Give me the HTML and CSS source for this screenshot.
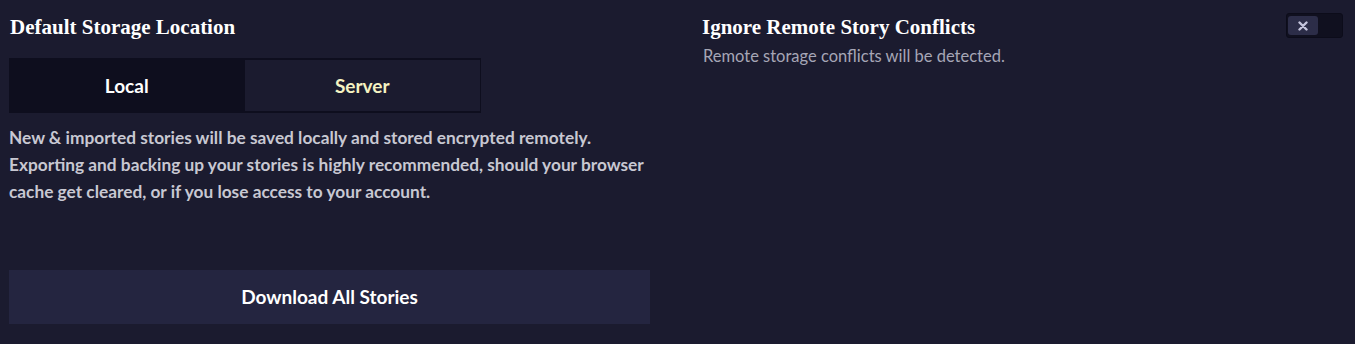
FILE: index.html
```html
<!DOCTYPE html>
<html>
<head>
<meta charset="utf-8">
<link rel="stylesheet" href="styles.css">
</head>
<body>
<div class="page">
  <section class="col">
    <h2 class="title">Default Storage Location</h2>
    <div class="seg">
      <button class="seg-btn active">Local</button>
      <button class="seg-btn">Server</button>
    </div>
    <p class="desc">New &amp; imported stories will be saved locally and stored encrypted remotely. Exporting and backing up your stories is highly recommended, should your browser cache get cleared, or if you lose access to your account.</p>
    <button class="wide-btn">Download All Stories</button>
  </section>
  <section class="col">
    <div class="setting">
      <div class="setting-text">
        <h2 class="title title-right">Ignore Remote Story Conflicts</h2>
        <p class="sub">Remote storage conflicts will be detected.</p>
      </div>
      <div class="switch">
        <span class="knob">
          <svg width="10" height="10" viewBox="0 0 10 10"><path d="M1.5 1.5 L8.5 8.5 M8.5 1.5 L1.5 8.5" stroke="#c4c4dc" stroke-width="2.4" stroke-linecap="round"/></svg>
        </span>
      </div>
    </div>
  </section>
</div>
</body>
</html>
```
FILE: styles.css
```css
html, body {
  margin: 0;
  padding: 0;
  background: #1b1b2f;
  width: 1355px;
  height: 344px;
  overflow: hidden;
}
.page {
  display: grid;
  grid-template-columns: 641px 641px;
  column-gap: 53px;
  padding: 0 9px;
  font-family: "Source Sans Pro", Lato, "Liberation Sans", sans-serif;
}
.col {
  display: flex;
  flex-direction: column;
}
.title {
  margin: 15px 0 0 1px;
  font-family: "Liberation Serif", serif;
  font-weight: 700;
  font-size: 21px;
  line-height: 24px;
  color: #ffffff;
}
.title-right {
  margin-left: -1px;
}
.seg {
  display: flex;
  margin-top: 19px;
  width: 472px;
  height: 55px;
  background: #0e0e1e;
  padding: 2px 1px 2px 0;
  box-sizing: border-box;
}
.seg-btn {
  flex: 1;
  border: 0;
  background: #1b1b2f;
  color: #f5f3c2;
  font-family: inherit;
  font-weight: 700;
  font-size: 19px;
}
.seg-btn.active {
  background: #0e0e1e;
  color: #ffffff;
}
.desc {
  margin: 11px 0 0 0;
  font-size: 17.3px;
  line-height: 27px;
  font-weight: 700;
  color: #c8c8d2;
}
.wide-btn {
  margin-top: 65px;
  height: 54px;
  border: 0;
  background: #242540;
  color: #ffffff;
  font-family: inherit;
  font-weight: 700;
  font-size: 19px;
  padding-bottom: 2px;
}
.setting {
  display: flex;
  justify-content: space-between;
  align-items: flex-start;
}
.sub {
  margin: 7px 0 0 0;
  font-size: 16.5px;
  line-height: 20px;
  color: #a6a6b6;
}
.switch {
  margin-top: 13px;
  margin-right: 1px;
  width: 57px;
  height: 25px;
  box-sizing: border-box;
  padding: 2px 1px;
  background: #10101f;
  border: 1px solid #0c0c1a;
  border-radius: 3px;
  display: flex;
}
.knob {
  width: 30px;
  height: 19px;
  background: #2c2d48;
  border-radius: 3px;
  display: flex;
  align-items: center;
  justify-content: center;
}
```
